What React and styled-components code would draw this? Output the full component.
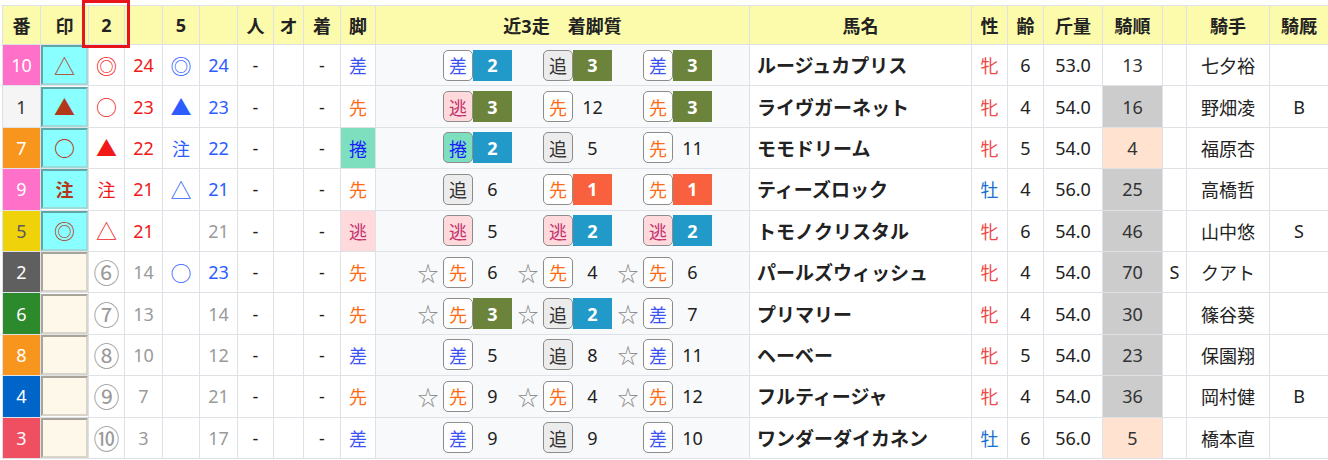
import React from "react";
import styled, { createGlobalStyle, css } from "styled-components";

const GlobalStyle = createGlobalStyle`
  html, body { margin: 0; padding: 0; background: #fff; }
  body {
    font-family: "Noto Sans", "Noto Sans CJK JP", sans-serif;
    color: #222;
  }
`;

const FRAME = {
  1: { bg: "#f5f5f5", fg: "#333" },
  2: { bg: "#5f5f5f", fg: "#fff" },
  3: { bg: "#ef4f60", fg: "#fff" },
  4: { bg: "#0064c8", fg: "#fff" },
  5: { bg: "#f0d20a", fg: "#5a5a5a" },
  6: { bg: "#2c892c", fg: "#fff" },
  7: { bg: "#f8951d", fg: "#fff" },
  8: { bg: "#ff70c9", fg: "#fff" },
};

const STYLE = {
  差: { fg: "#3b52f5", bg: "#ffffff", cell: "transparent" },
  追: { fg: "#333333", bg: "#ececec", cell: "transparent" },
  逃: { fg: "#c2306e", bg: "#ffd9dc", cell: "#ffd9dc" },
  先: { fg: "#ff6a13", bg: "#ffffff", cell: "transparent" },
  捲: { fg: "#1a1aff", bg: "#7ddfbe", cell: "#7ddfbe" },
};

const PLACE = { 1: "#f9603e", 2: "#2199c9", 3: "#6b833b" };

const TONE = {
  red: "#f01818",
  blue: "#2d5cff",
  gray: "#9a9a9a",
  dark: "#222",
};

const RANK_BG = { gray: "#cccccc", peach: "#ffe2cf", none: "transparent" };

const rows = [
  { no: 10, frame: 8, mark: "△", p2: "◎", n2: 24, t2: "red", p5: "◎", n5: 24, t5: "blue", style: "差",
    races: [[0, "差", 2], [0, "追", 3], [0, "差", 3]], name: "ルージュカプリス", sex: "牝", age: 6, wt: "53.0", rank: 13, rt: "none", extra: "", jockey: "七夕裕", stable: "" },
  { no: 1, frame: 1, mark: "▲", p2: "○", n2: 23, t2: "red", p5: "▲", n5: 23, t5: "blue", style: "先",
    races: [[0, "逃", 3], [0, "先", 12], [0, "先", 3]], name: "ライヴガーネット", sex: "牝", age: 4, wt: "54.0", rank: 16, rt: "gray", extra: "", jockey: "野畑凌", stable: "B" },
  { no: 7, frame: 7, mark: "○", p2: "▲", n2: 22, t2: "red", p5: "注", n5: 22, t5: "blue", style: "捲",
    races: [[0, "捲", 2], [0, "追", 5], [0, "先", 11]], name: "モモドリーム", sex: "牝", age: 5, wt: "54.0", rank: 4, rt: "peach", extra: "", jockey: "福原杏", stable: "" },
  { no: 9, frame: 8, mark: "注", p2: "注", n2: 21, t2: "red", p5: "△", n5: 21, t5: "blue", style: "先",
    races: [[0, "追", 6], [0, "先", 1], [0, "先", 1]], name: "ティーズロック", sex: "牡", age: 4, wt: "56.0", rank: 25, rt: "gray", extra: "", jockey: "高橋哲", stable: "" },
  { no: 5, frame: 5, mark: "◎", p2: "△", n2: 21, t2: "red", p5: "", n5: 21, t5: "gray", style: "逃",
    races: [[0, "逃", 5], [0, "逃", 2], [0, "逃", 2]], name: "トモノクリスタル", sex: "牝", age: 6, wt: "54.0", rank: 46, rt: "gray", extra: "", jockey: "山中悠", stable: "S" },
  { no: 2, frame: 2, mark: "", p2: "⑥", n2: 14, t2: "gray", p5: "○", n5: 23, t5: "blue", style: "先",
    races: [[1, "先", 6], [1, "先", 4], [1, "先", 6]], name: "パールズウィッシュ", sex: "牝", age: 4, wt: "54.0", rank: 70, rt: "gray", extra: "S", jockey: "クアト", stable: "" },
  { no: 6, frame: 6, mark: "", p2: "⑦", n2: 13, t2: "gray", p5: "", n5: 14, t5: "gray", style: "先",
    races: [[1, "先", 3], [1, "追", 2], [1, "差", 7]], name: "プリマリー", sex: "牝", age: 4, wt: "54.0", rank: 30, rt: "gray", extra: "", jockey: "篠谷葵", stable: "" },
  { no: 8, frame: 7, mark: "", p2: "⑧", n2: 10, t2: "gray", p5: "", n5: 12, t5: "gray", style: "差",
    races: [[0, "差", 5], [0, "追", 8], [1, "差", 11]], name: "ヘーベー", sex: "牝", age: 5, wt: "54.0", rank: 23, rt: "gray", extra: "", jockey: "保園翔", stable: "" },
  { no: 4, frame: 4, mark: "", p2: "⑨", n2: 7, t2: "gray", p5: "", n5: 21, t5: "gray", style: "先",
    races: [[1, "先", 9], [1, "先", 4], [1, "先", 12]], name: "フルティージャ", sex: "牝", age: 4, wt: "54.0", rank: 36, rt: "gray", extra: "", jockey: "岡村健", stable: "B" },
  { no: 3, frame: 3, mark: "", p2: "⑩", n2: 3, t2: "gray", p5: "", n5: 17, t5: "gray", style: "差",
    races: [[0, "差", 9], [0, "追", 9], [0, "差", 10]], name: "ワンダーダイカネン", sex: "牡", age: 6, wt: "56.0", rank: 5, rt: "peach", extra: "", jockey: "橋本直", stable: "" },
];

const COLS = [38, 48, 36, 38, 37, 38, 36, 30, 37, 35, 374, 222, 36, 36, 59, 60, 24, 83, 59];

const SHAPES = ["○", "◎", "△", "▲"];
const CIRCLED = ["⑥", "⑦", "⑧", "⑨", "⑩"];

const Page = styled.div`
  position: relative;
  padding: 5px 0 0 2px;
`;

const Table = styled.table`
  border-collapse: collapse;
  table-layout: fixed;
  width: 1326px;
  font-size: 18px;
`;

const HeadRow = styled.tr`
  height: 39px;
`;

const BodyRow = styled.tr`
  height: 41.4px;
`;

const HeadCell = styled.th`
  padding: 0;
  background: #fbfbab;
  border: 1px solid #dee2e6;
  font-weight: 700;
  font-size: 18px;
  color: #222;
  text-align: center;
  vertical-align: middle;
  white-space: nowrap;
`;

/* red annotation frame drawn over the "2" header cell */
const Highlight = styled.div`
  position: absolute;
  z-index: 5;
  left: 82px;
  top: 0;
  width: 48px;
  height: 48px;
  box-sizing: border-box;
  border: 3px solid #e8141c;
  pointer-events: none;
`;

const Cell = styled.td`
  padding: 0;
  border: 1px solid #dee2e6;
  text-align: ${(p) => p.$align || "center"};
  vertical-align: middle;
  white-space: nowrap;
  color: ${(p) => (p.$tone ? TONE[p.$tone] : "#222")};
  background: ${(p) => p.$bg || "transparent"};
`;

const FrameCell = styled(Cell)`
  background: ${(p) => FRAME[p.$frame].bg};
  color: ${(p) => FRAME[p.$frame].fg};
`;

const Mark = styled.div`
  font-family: "Noto Sans CJK JP", sans-serif;
  font-size: ${(p) => (p.$kind === "shape" ? "21px" : p.$kind === "circled" ? "26px" : "18px")};
  font-weight: ${(p) => (p.$bold ? 700 : 400)};
  line-height: 1;
  text-align: center;
`;

const MarkBox = styled.div`
  box-sizing: border-box;
  height: 40px;
  display: flex;
  align-items: center;
  justify-content: center;
  color: #b3381a;
  ${(p) =>
    p.$active
      ? css`
          background: #8affff;
          border: 2px solid;
          border-color: #5fa7a7 #9fdada #9fdada #5fa7a7;
        `
      : css`
          background: #fdf8ea;
          border: 2px solid;
          border-color: #a8a49a #d8d4ca #d8d4ca #a8a49a;
        `}
`;

const StyleCell = styled(Cell)`
  background: ${(p) => STYLE[p.$kind].cell};
  color: ${(p) => STYLE[p.$kind].fg};
`;

const RacesCell = styled(Cell)`
  background: #f8f9fa;
`;

const RaceList = styled.div`
  display: flex;
  justify-content: center;
  align-items: center;
  gap: 1px;
`;

const RaceGroup = styled.div`
  display: flex;
  align-items: center;
`;

const Star = styled.span`
  width: 30px;
  text-align: center;
  color: #8a8a8a;
  font-family: "Noto Sans CJK JP", sans-serif;
  font-size: 21px;
  line-height: 31px;
`;

const StyleBadge = styled.span`
  box-sizing: border-box;
  width: 30px;
  height: 31px;
  border: 1px solid #8c8c8c;
  border-radius: 5px;
  display: flex;
  align-items: center;
  justify-content: center;
  background: ${(p) => STYLE[p.$kind].bg};
  color: ${(p) => STYLE[p.$kind].fg};
  font-size: 18px;
`;

const Result = styled.span`
  width: 39px;
  height: 31px;
  display: flex;
  align-items: center;
  justify-content: center;
  font-size: 18px;
  ${(p) =>
    PLACE[p.$place]
      ? css`
          background: ${PLACE[p.$place]};
          color: #fff;
          font-weight: 700;
        `
      : css`
          color: #222;
        `}
`;

const NameCell = styled(Cell)`
  text-align: left;
  padding-left: 7px;
  font-weight: 700;
  font-size: 19px;
  color: #222;
`;

const SexCell = styled(Cell)`
  color: ${(p) => (p.$male ? "#1a6fd0" : "#f04848")};
`;

const RankCell = styled(Cell)`
  background: ${(p) => RANK_BG[p.$tone]};
  color: #333;
`;

function markKind(m) {
  if (SHAPES.includes(m)) return "shape";
  if (CIRCLED.includes(m)) return "circled";
  return "text";
}

function Sign({ value, bold }) {
  if (!value) return null;
  return (
    <Mark $kind={markKind(value)} $bold={bold}>
      {value}
    </Mark>
  );
}

function Race({ star, kind, place }) {
  return (
    <RaceGroup>
      <Star>{star ? "☆" : ""}</Star>
      <StyleBadge $kind={kind}>{kind}</StyleBadge>
      <Result $place={place}>{place}</Result>
    </RaceGroup>
  );
}

export default function App() {
  return (
    <>
      <GlobalStyle />
      <Page>
        <Highlight />
        <Table>
          <colgroup>
            {COLS.map((w, i) => (
              <col key={i} style={{ width: w }} />
            ))}
          </colgroup>
          <thead>
            <HeadRow>
              <HeadCell>番</HeadCell>
              <HeadCell>印</HeadCell>
              <HeadCell>2</HeadCell>
              <HeadCell />
              <HeadCell>5</HeadCell>
              <HeadCell />
              <HeadCell>人</HeadCell>
              <HeadCell>オ</HeadCell>
              <HeadCell>着</HeadCell>
              <HeadCell>脚</HeadCell>
              <HeadCell>近3走　着脚質</HeadCell>
              <HeadCell>馬名</HeadCell>
              <HeadCell>性</HeadCell>
              <HeadCell>齢</HeadCell>
              <HeadCell>斤量</HeadCell>
              <HeadCell>騎順</HeadCell>
              <HeadCell />
              <HeadCell>騎手</HeadCell>
              <HeadCell>騎厩</HeadCell>
            </HeadRow>
          </thead>
          <tbody>
            {rows.map((r) => (
              <BodyRow key={r.no}>
                <FrameCell $frame={r.frame}>{r.no}</FrameCell>
                <Cell>
                  <MarkBox $active={!!r.mark}>
                    <Sign value={r.mark} bold={r.mark === "注" || r.mark === "○"} />
                  </MarkBox>
                </Cell>
                <Cell $tone={r.t2}>
                  <Sign value={r.p2} />
                </Cell>
                <Cell $tone={r.t2}>{r.n2}</Cell>
                <Cell $tone={r.t5}>
                  <Sign value={r.p5} />
                </Cell>
                <Cell $tone={r.t5}>{r.n5}</Cell>
                <Cell>-</Cell>
                <Cell />
                <Cell>-</Cell>
                <StyleCell $kind={r.style}>{r.style}</StyleCell>
                <RacesCell>
                  <RaceList>
                    {r.races.map(([star, kind, place], i) => (
                      <Race key={i} star={star} kind={kind} place={place} />
                    ))}
                  </RaceList>
                </RacesCell>
                <NameCell>{r.name}</NameCell>
                <SexCell $male={r.sex === "牡"}>{r.sex}</SexCell>
                <Cell>{r.age}</Cell>
                <Cell>{r.wt}</Cell>
                <RankCell $tone={r.rt}>{r.rank}</RankCell>
                <Cell>{r.extra}</Cell>
                <Cell>{r.jockey}</Cell>
                <Cell>{r.stable}</Cell>
              </BodyRow>
            ))}
          </tbody>
        </Table>
      </Page>
    </>
  );
}
